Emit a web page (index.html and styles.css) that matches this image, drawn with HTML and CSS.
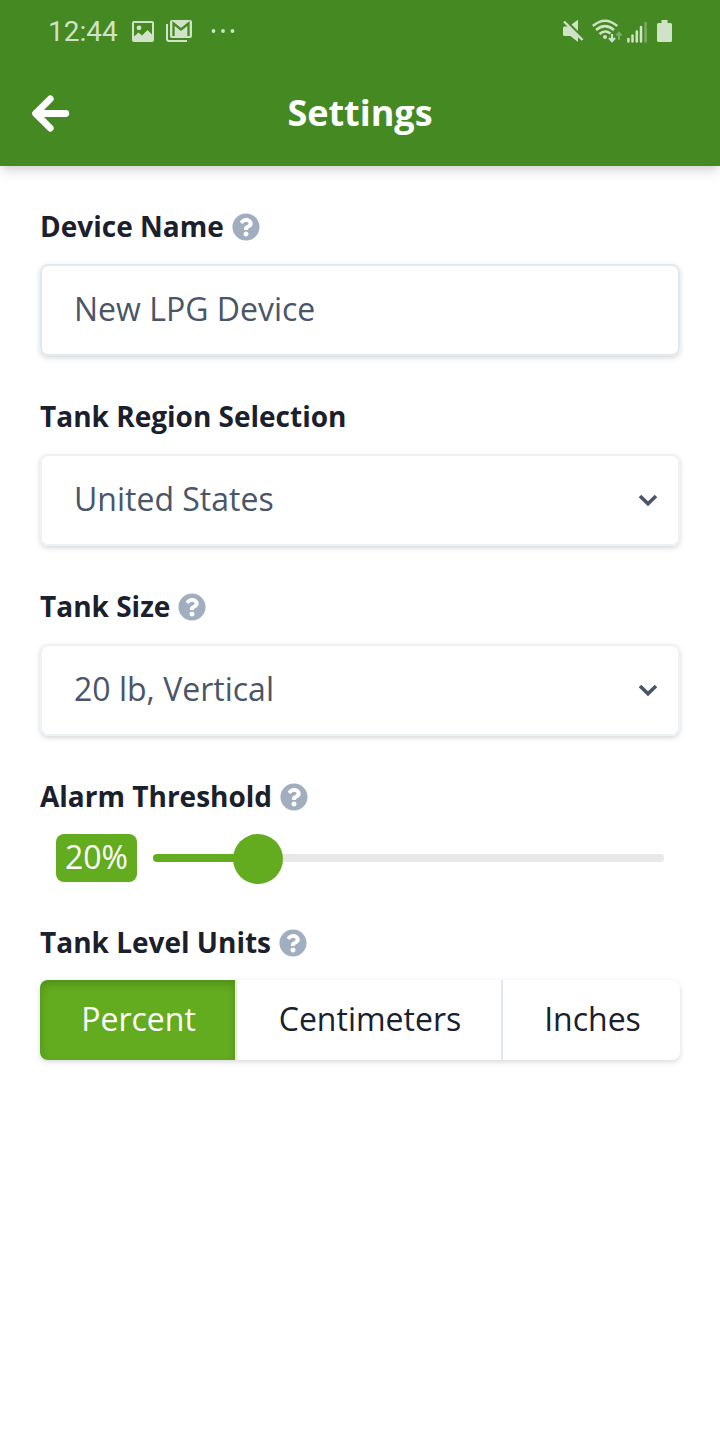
FILE: index.html
```html
<!DOCTYPE html>
<html lang="en">
<head>
<meta charset="utf-8">
<title>Settings</title>
<link rel="stylesheet" href="styles.css">
</head>
<body>
<svg class="defs" width="0" height="0">
  <symbol id="help" viewBox="0 0 512 512"><path fill="currentColor" d="M504 256c0 136.997-111.043 248-248 248S8 392.997 8 256C8 119.083 119.043 8 256 8s248 111.083 248 248zM262.655 90c-54.497 0-89.255 22.957-116.549 63.758-3.536 5.286-2.353 12.415 2.715 16.258l34.699 26.31c5.205 3.947 12.621 3.008 16.665-2.122 17.864-22.658 30.113-35.797 57.303-35.797 20.429 0 45.698 13.148 45.698 32.958 0 14.976-12.363 22.667-32.534 33.976C247.128 238.528 216 254.941 216 296v4c0 6.627 5.373 12 12 12h56c6.627 0 12-5.373 12-12v-1.333c0-28.462 83.186-29.647 83.186-106.667 0-58.002-60.165-102-116.531-102zM256 338c-25.365 0-46 20.635-46 46 0 25.364 20.635 46 46 46s46-20.636 46-46c0-25.365-20.635-46-46-46z"/></symbol>
</svg>
<header class="top">
  <div class="status">
    <span class="clock">12:44</span>
    <svg class="photo" width="22" height="21" viewBox="0 0 22 21"><path fill="currentColor" fill-rule="evenodd" d="M2 0H20Q22 0 22 2V19Q22 21 20 21H2Q0 21 0 19V2Q0 0 2 0ZM2 2V15.500L6.500 11.500L10 14.500L15.500 9L20 13.500V2Z"/><circle cx="7" cy="6.800" r="2.400" fill="currentColor"/></svg>
    <svg class="mail" width="26" height="22" viewBox="0 0 26 22"><path d="M1 4V19Q1 21 3 21H21" fill="none" stroke="currentColor" stroke-width="2"/><rect x="4" width="22" height="18" rx="2" fill="currentColor"/><path d="M7.500 16V3.500L15 9.500L22.500 3.500V16" fill="none" stroke="#448922" stroke-width="2.300"/></svg>
    <svg class="more" width="24" height="4" viewBox="0 0 24 4" fill="currentColor"><circle cx="2.500" cy="2" r="1.900"/><circle cx="12" cy="2" r="1.900"/><circle cx="21.500" cy="2" r="1.900"/></svg>
    <svg class="mute" width="22" height="24" viewBox="0 0 22 24"><path fill="currentColor" d="M1 9Q1 7.500 2.500 7.500H6L16 17.500V23L8.500 17H2.500Q1 17 1 15.500ZM9.500 5.500L16 .8V12Z"/><path d="M2 2.500L20.500 21" stroke="currentColor" stroke-width="2.400"/></svg>
    <svg class="wifi" width="30" height="24" viewBox="0 0 30 24" fill="none" stroke="currentColor" stroke-width="2.500"><path d="M.8 7Q13 -3.500 25.200 7M4 11Q13 3.300 22 11M7.500 15Q13 10.300 18.500 14.500"/><circle cx="13" cy="18" r="2" fill="currentColor" stroke="none"/><path stroke-width="2.100" d="M20 15V22M17 19L20 22.200L23 19"/><path opacity=".4" stroke-width="2.100" d="M27 21V14M24.300 16.500L27 13.800L29.700 16.500"/></svg>
    <svg class="signal" width="21" height="22" viewBox="0 0 21 22" fill="none" stroke="currentColor" stroke-width="2.500" stroke-linecap="round"><path d="M1.400 18V20.500M5.500 14.500V20.500M9.800 10.500V20.500M14 6V20.500"/><path opacity=".4" d="M18.600 2V20.500"/></svg>
    <svg class="battery" width="15" height="22" viewBox="0 0 15 22"><path fill="currentColor" d="M4.500 0H10.500V3H13.500Q15 3 15 4.500V20.500Q15 22 13.500 22H1.500Q0 22 0 20.500V4.500Q0 3 1.500 3H4.500Z"/></svg>
  </div>
  <div class="nav">
    <svg class="back" width="40" height="40" viewBox="0 0 40 40" fill="none" stroke="#fff" stroke-width="6.800" stroke-linecap="round" stroke-linejoin="round"><path d="M20.300 4.900L5.600 19.500L20.300 34.100"/><path d="M6 19.500H35.800"/></svg>
    <h1 class="title">Settings</h1>
  </div>
</header>
<main class="form">
  <section class="field">
    <div class="label">Device Name<svg class="help"><use href="#help"/></svg></div>
    <div class="box input">New LPG Device</div>
  </section>
  <section class="field">
    <div class="label">Tank Region Selection</div>
    <div class="box">United States<svg class="chevron" viewBox="0 0 20 14"><path d="M2 3L10 10.800L18 3"/></svg></div>
  </section>
  <section class="field">
    <div class="label">Tank Size<svg class="help"><use href="#help"/></svg></div>
    <div class="box">20 lb, Vertical<svg class="chevron" viewBox="0 0 20 14"><path d="M2 3L10 10.800L18 3"/></svg></div>
  </section>
  <section class="field alarm">
    <div class="label">Alarm Threshold<svg class="help"><use href="#help"/></svg></div>
    <div class="slider"><span class="value">20%</span><div class="track"><div class="fill"></div><div class="thumb"></div></div></div>
  </section>
  <section class="field">
    <div class="label">Tank Level Units<svg class="help"><use href="#help"/></svg></div>
    <div class="segments"><div class="segment active">Percent</div><div class="segment middle">Centimeters</div><div class="segment last">Inches</div></div>
  </section>
</main>
</body>
</html>
```
FILE: styles.css
```css
* { box-sizing: border-box; }
body { margin: 0; height: 1440px; background: #fff; color: #1a202c; font-family: "Open Sans", "Noto Sans", sans-serif; font-size: 32px; overflow: hidden; }
svg { display: block; flex: none; }
.defs { position: absolute; }
.top { height: 166px; background: #448922; box-shadow: 0 8px 12px -2px rgba(0,0,0,.1), 0 4px 8px -2px rgba(0,0,0,.1); }
.status { height: 62px; padding: 0 48px; display: flex; align-items: center; color: #d0e2c8; }
.clock { width: 84px; padding-top: 2px; font: 400 28px/62px Roboto, sans-serif; }
.photo { margin-top: 1px; }
.mail { margin-left: 12px; }
.more { margin-left: 19px; }
.mute { margin-left: auto; }
.wifi { margin-left: 8px; }
.signal { margin-left: 5px; margin-top: 2px; }
.battery { margin-left: 9px; }
.nav { height: 104px; padding: 0 30px; display: grid; grid-template-columns: 40px 1fr 40px; align-items: center; }
.title { margin: 0; padding-bottom: 2px; font-size: 36px; font-weight: 700; line-height: 54px; text-align: center; color: #fff; }
.form { padding: 40px; }
.field { height: 190px; }
.label { height: 42px; margin-bottom: 16px; display: flex; align-items: flex-start; gap: 8px; font-size: 28px; font-weight: 700; line-height: 40px; }
.help { width: 28px; height: 28px; margin-top: 7px; color: #a0aec0; }
.box { height: 92px; padding: 0 20px 2px 32px; border: 2px solid #edf2f7; border-radius: 8px; display: flex; align-items: center; justify-content: space-between; line-height: 48px; color: #4a5568; box-shadow: 0 2px 6px rgba(0,0,0,.1), 0 2px 4px rgba(0,0,0,.06); }
.input { border-color: #e2e8f0; }
.chevron { width: 20px; height: 14px; margin-top: 2px; fill: none; stroke: #4a5568; stroke-width: 3.6; }
.alarm { height: 146px; }
.slider { height: 48px; padding: 0 16px; display: flex; align-items: center; gap: 16px; }
.value { width: 81px; height: 48px; border-radius: 8px; background: #63ac1f; color: #fff; text-align: center; line-height: 45px; }
.track { flex: 1; height: 8px; border-radius: 4px; background: #e8e8e8; display: flex; align-items: center; }
.fill { width: 105px; height: 8px; border-radius: 4px; background: #63ac1f; }
.thumb { flex: none; width: 50px; height: 50px; margin: 2px 0 0 -25px; border-radius: 50%; background: #63ac1f; }
.segments { height: 80px; display: flex; border-radius: 8px; box-shadow: 0 2px 6px rgba(0,0,0,.1), 0 2px 4px rgba(0,0,0,.06); }
.segment { padding: 0 0 2px 2px; display: flex; align-items: center; justify-content: center; line-height: 48px; }
.active { width: 197px; border-right: 2px solid #e2f0d8; border-radius: 8px 0 0 8px; background: #63ac1f; background-clip: padding-box; box-shadow: inset 0 4px 8px rgba(0,0,0,.18); color: #fff; }
.middle { width: 266px; border-right: 2px solid #e2e8f0; }
.last { flex: 1; }
.alarm .label { margin-bottom: 16px; }
```
